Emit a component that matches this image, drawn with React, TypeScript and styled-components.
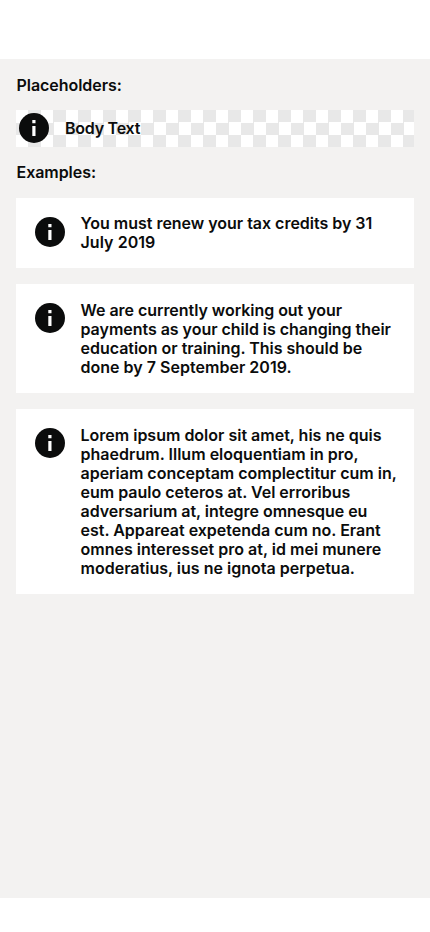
import React from 'react';
import styled, { createGlobalStyle } from 'styled-components';

const GlobalStyle = createGlobalStyle`
  * { box-sizing: border-box; }
  body { margin: 0; background: #fff; }
`;

const Page = styled.div`
  height: 932px;
  padding: 59px 0 34px;
  background: #fff;
  font-family: Inter, 'Liberation Sans', sans-serif;
  font-size: 16px;
  font-weight: 600;
  line-height: 19px;
  color: #0b0c0c;
`;

const Screen = styled.main`
  height: 839px;
  padding: 16.5px 16px 0;
  background: #f3f2f1;
`;

const Heading = styled.h2`
  margin: 0;
  font: inherit;
  padding-left: 0.5px;
  letter-spacing: -0.05px;
`;

const Placeholder = styled.div`
  display: flex;
  align-items: center;
  gap: 16px;
  height: 36.5px;
  margin: 15.5px 0 16px;
  padding-left: 3px;
  background: repeating-conic-gradient(#e8e8e8 0 25%, #fff 0 50%) 0 0 / 25px 25px;
`;

const Cards = styled.div`
  display: grid;
  gap: 16.2px;
  margin-top: 16.2px;
`;

const Card = styled.section`
  display: flex;
  align-items: flex-start;
  gap: 15.5px;
  padding: 16.5px 0 16px 19px;
  background: #fff;
`;

const Icon = styled.svg`
  display: block;
  flex: none;
  width: 30px;
  height: 30px;
`;

const CardIcon = styled(Icon)`
  margin-top: 2.5px;
`;

const Message = styled.p`
  margin: 0;
`;

const Line = styled.span<{ $spacing: number }>`
  display: block;
  white-space: nowrap;
  letter-spacing: ${(p) => p.$spacing}px;
`;

const InfoShape = () => (
  <>
    <circle cx="15" cy="15" r="15" fill="#0b0c0c" />
    <path d="M13.3 7h3.2v3.2h-3.2zM13.3 13h3.2v10h-3.2z" fill="#fff" />
  </>
);

type MessageLine = { text: string; spacing: number };

const messages: MessageLine[][] = [
  [
    { text: 'You must renew your tax credits by 31', spacing: -0.02 },
    { text: 'July 2019', spacing: 0.06 },
  ],
  [
    { text: 'We are currently working out your', spacing: -0.04 },
    { text: 'payments as your child is changing their', spacing: -0.03 },
    { text: 'education or training. This should be', spacing: -0.02 },
    { text: 'done by 7 September 2019.', spacing: 0.02 },
  ],
  [
    { text: 'Lorem ipsum dolor sit amet, his ne quis', spacing: 0 },
    { text: 'phaedrum. Illum eloquentiam in pro,', spacing: 0.02 },
    { text: 'aperiam conceptam complectitur cum in,', spacing: -0.01 },
    { text: 'eum paulo ceteros at. Vel erroribus', spacing: -0.01 },
    { text: 'adversarium at, integre omnesque eu', spacing: -0.03 },
    { text: 'est. Appareat expetenda cum no. Erant', spacing: 0 },
    { text: 'omnes interesset pro at, id mei munere', spacing: 0.02 },
    { text: 'moderatius, ius ne ignota perpetua.', spacing: 0.01 },
  ],
];

export default function App() {
  return (
    <>
      <GlobalStyle />
      <Page>
        <Screen>
          <Heading>Placeholders:</Heading>
          <Placeholder>
            <Icon viewBox="0 0 30 30"><InfoShape /></Icon>
            <Line $spacing={-0.25}>Body Text</Line>
          </Placeholder>
          <Heading>Examples:</Heading>
          <Cards>
            {messages.map((lines) => (
              <Card key={lines[0].text}>
                <CardIcon viewBox="0 0 30 30"><InfoShape /></CardIcon>
                <Message>
                  {lines.map(({ text, spacing }) => (
                    <Line key={text} $spacing={spacing}>{text}</Line>
                  ))}
                </Message>
              </Card>
            ))}
          </Cards>
        </Screen>
      </Page>
    </>
  );
}
